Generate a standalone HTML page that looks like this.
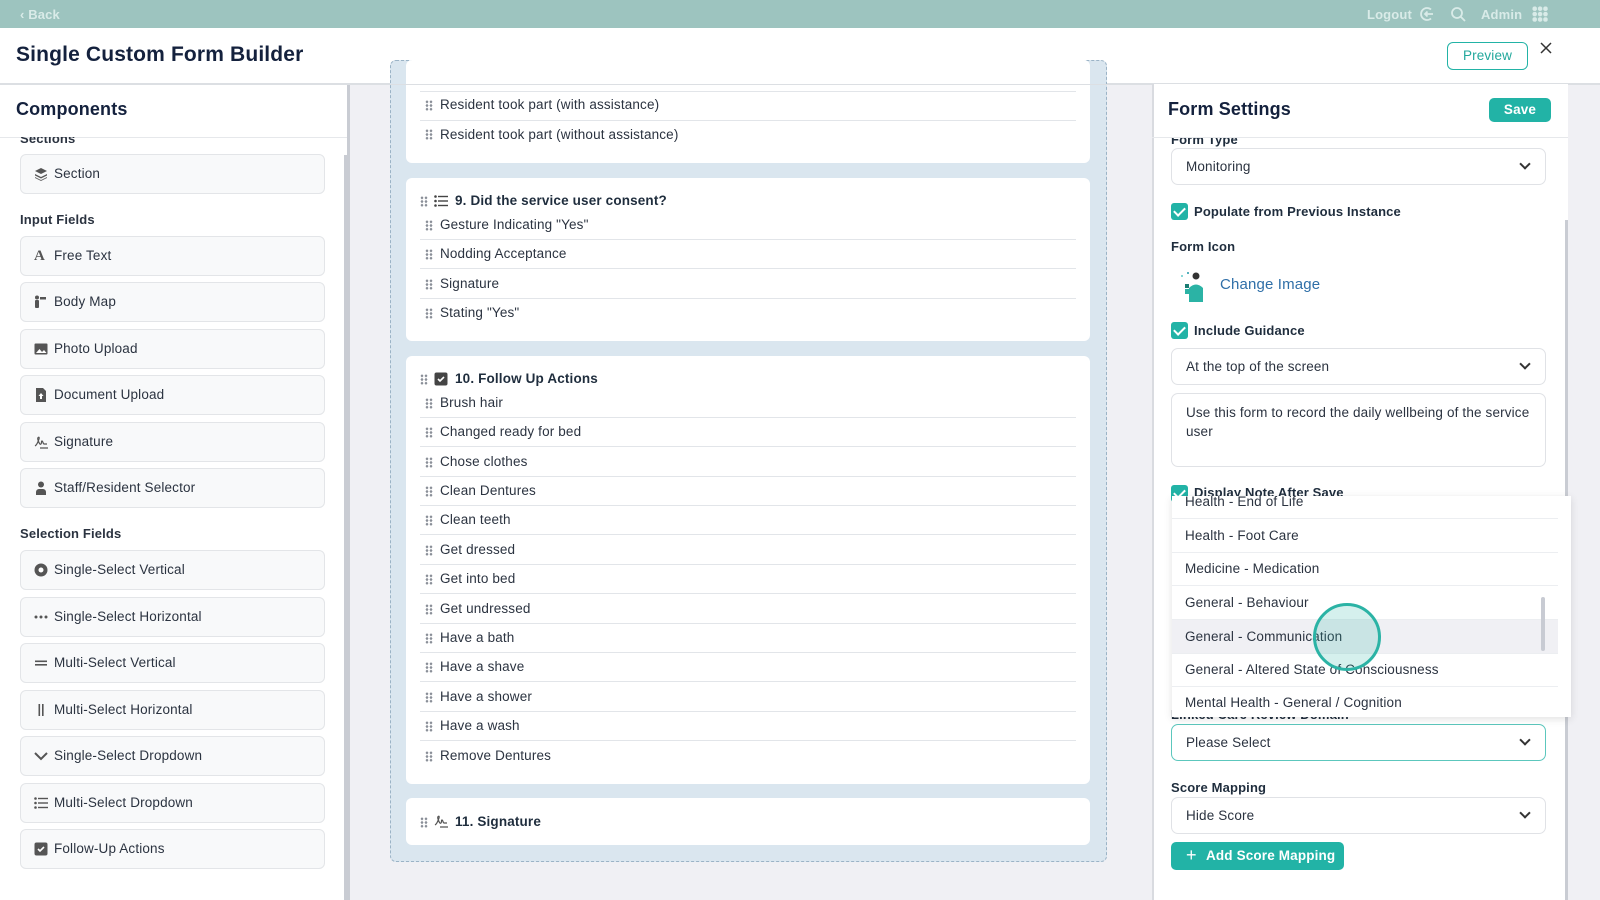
<!DOCTYPE html>
<html><head><meta charset="utf-8"><style>
*{box-sizing:border-box;margin:0;padding:0}
body{width:1600px;height:900px;overflow:hidden;font-family:"Liberation Sans",sans-serif;color:#1f2d3d;background:#f0f0f4;position:relative;font-size:13.5px;letter-spacing:0.15px}
.a{position:absolute}
.top{left:0;top:0;width:1600px;height:28px;background:#9dc4bf;color:#d9ebe8;font-size:13px;font-weight:bold}
.hdr{left:0;top:28px;width:1600px;height:56px;background:#fff;border-bottom:1px solid #dcdfe3}
.left{left:0;top:84px;width:347px;height:816px;background:#fff;overflow:hidden}
.item{position:absolute;left:20px;width:305px;height:40px;background:#f8f9fa;border:1px solid #e3e5e8;border-radius:6px;line-height:38px;padding-left:33px;color:#2b3340}
.ic{position:absolute;left:13px;top:12px;width:14px;height:14px}
.lbl{position:absolute;left:20px;font-weight:bold;font-size:13px;color:#2b3340}
.cont{left:390px;top:60px;width:717px;height:802px;background:#dae6ef;border:1px dashed #9bb3c6;border-radius:6px}
.card{position:absolute;left:406px;width:684px;background:#fff;border-radius:6px}
.row{position:absolute;left:440px;font-size:13.5px;color:#2b3340}
.sep{position:absolute;left:420px;width:656px;height:1px;background:#e2e5e9}
.dh{position:absolute;width:8px;height:11px;background-image:radial-gradient(circle,#8a8f98 1.2px,transparent 1.4px);background-size:4px 3.7px}
.right{left:1152px;top:84px;width:416px;height:816px;background:#fff;border-left:2px solid #d9dbe0}
.sel{position:absolute;left:1171px;width:375px;height:37px;border:1px solid #e0e2e6;border-radius:7px;background:#fff;padding-left:14px;line-height:35px;color:#2b3340}
.chev{position:absolute;right:16px;width:8px;height:8px;border-right:2px solid #333;border-bottom:2px solid #333;transform:rotate(45deg);top:11px}
.cb{position:absolute;left:1171px;width:17px;height:17px;background:#22b3a6;border-radius:3px}
.cb:after{content:"";position:absolute;left:5px;top:2px;width:5px;height:9px;border-right:2px solid #fff;border-bottom:2px solid #fff;transform:rotate(45deg)}
.rl{position:absolute;left:1171px;font-weight:bold;font-size:13px;color:#1f2d3d}
.dd{position:absolute;left:1172px;top:496px;width:399px;height:221px;background:#fff;box-shadow:0 2px 8px rgba(0,0,0,.12);overflow:hidden}
.ddi{position:absolute;left:0;width:386px;height:33.5px;border-bottom:1px solid #eceef1;padding-left:13px;line-height:33px;color:#2b3340}
</style></head><body>
<svg width="0" height="0" style="position:absolute"><defs><g id="sig"><path d="M1 11c2-1 3-4 4-7 1-3-2-2-1 1 1 3 2 5 3 4s0-3 1-3 1 3 2 3h3M6 13h8" fill="none" stroke="#555" stroke-width="1.2"/></g></defs></svg>
<div class="a top"><span class="a" style="left:20px;top:7px">‹ Back</span>
<span class="a" style="left:1367px;top:7px">Logout</span>
<svg class="a" style="left:1419px;top:6px" width="16" height="16" viewBox="0 0 16 16" fill="none" stroke="#d9ebe8" stroke-width="1.8"><path d="M12 3.5A6 6 0 1 0 12 12.5M14 8H6M8.5 5.5 6 8l2.5 2.5"/></svg>
<svg class="a" style="left:1450px;top:6px" width="16" height="16" viewBox="0 0 16 16" fill="none" stroke="#d9ebe8" stroke-width="1.8"><circle cx="7" cy="7" r="5"/><path d="M11 11l4 4"/></svg>
<span class="a" style="left:1481px;top:7px">Admin</span>
<div class="a" style="left:1532px;top:6px;width:16px;height:16px;background-image:radial-gradient(circle,#d9ebe8 2.2px,transparent 2.3px);background-size:5.4px 5.4px"></div>
</div>
<div class="a hdr"><div class="a" style="left:16px;top:15px;font-size:21px;font-weight:bold;color:#14213d">Single Custom Form Builder</div>
<div class="a" style="left:1447px;top:14px;width:81px;height:28px;border:1.5px solid #22b3a6;border-radius:6px;color:#22a89c;text-align:center;line-height:25px;font-size:13.5px">Preview</div>
<svg class="a" style="left:1540px;top:14px" width="12" height="12" viewBox="0 0 12 12" stroke="#333" stroke-width="1.5"><path d="M1 1l10 10M11 1L1 11"/></svg></div>

<div class="a left">
<div class="a" style="left:16px;top:15px;font-size:18px;font-weight:bold;color:#14213d">Components</div>
<div class="a" style="left:0;top:53px;width:347px;height:1px;background:#e6e8eb"></div>
<div class="a" style="left:344px;top:71px;width:3px;height:745px;background:#c9ccd3"></div>
</div>
<div class="lbl" style="top:131px;clip-path:inset(6px 0 0 0)">Sections</div>
<div class="item" style="top:154px"><svg class="ic" viewBox="0 0 14 14" fill="#555"><path d="M7 1l6 3-6 3-6-3z"/><path d="M1 7l6 3 6-3v1.5l-6 3-6-3z"/><path d="M1 10l6 3 6-3v1l-6 3-6-3z" opacity=".9"/></svg>Section</div>
<div class="lbl" style="top:212px">Input Fields</div>
<div class="item" style="top:236px"><span class="ic" style="font-weight:bold;font-size:15px;line-height:14px;color:#555;font-family:'Liberation Serif',serif">A</span>Free Text</div>
<div class="item" style="top:282px"><svg class="ic" viewBox="0 0 14 14" fill="#555"><circle cx="3" cy="2.5" r="2"/><rect x="1" y="5" width="4" height="8" rx="1"/><rect x="6" y="2" width="6" height="2.5"/></svg>Body Map</div>
<div class="item" style="top:329px"><svg class="ic" viewBox="0 0 14 14"><rect x="0.5" y="1.5" width="13" height="11" rx="1" fill="#555"/><path d="M2 11l3.5-4 2.5 3 2-2 2.5 3z" fill="#fff"/></svg>Photo Upload</div>
<div class="item" style="top:375px"><svg class="ic" viewBox="0 0 14 14"><path d="M2 0h7l3 3v11H2z" fill="#555"/><path d="M7 5l-2.5 3h1.5v3h2V8h1.5z" fill="#fff"/></svg>Document Upload</div>
<div class="item" style="top:422px"><svg class="ic" viewBox="0 0 14 14"><use href="#sig"/></svg>Signature</div>
<div class="item" style="top:468px"><svg class="ic" viewBox="0 0 14 14" fill="#555"><circle cx="7" cy="3.5" r="3"/><path d="M2 14v-3a3 3 0 0 1 3-3h4a3 3 0 0 1 3 3v3z"/></svg>Staff/Resident Selector</div>
<div class="lbl" style="top:526px">Selection Fields</div>
<div class="item" style="top:550px"><svg class="ic" viewBox="0 0 14 14"><circle cx="7" cy="7" r="6.5" fill="#555"/><circle cx="7" cy="7" r="2.5" fill="#fff"/></svg>Single-Select Vertical</div>
<div class="item" style="top:597px"><svg class="ic" viewBox="0 0 14 14" fill="#555"><circle cx="2" cy="7" r="1.5"/><circle cx="7" cy="7" r="1.5"/><circle cx="12" cy="7" r="1.5"/></svg>Single-Select Horizontal</div>
<div class="item" style="top:643px"><svg class="ic" viewBox="0 0 14 14" fill="#555"><rect x="1" y="4.5" width="12" height="1.6"/><rect x="1" y="8" width="12" height="1.6"/></svg>Multi-Select Vertical</div>
<div class="item" style="top:690px"><svg class="ic" viewBox="0 0 14 14" fill="#555"><rect x="4.5" y="1" width="1.6" height="12"/><rect x="8" y="1" width="1.6" height="12"/></svg>Multi-Select Horizontal</div>
<div class="item" style="top:736px"><svg class="ic" viewBox="0 0 14 14" fill="none" stroke="#555" stroke-width="2"><path d="M1 4l6 6 6-6"/></svg>Single-Select Dropdown</div>
<div class="item" style="top:783px"><svg class="ic" viewBox="0 0 14 14" fill="#555"><circle cx="1.5" cy="2.5" r="1.3"/><circle cx="1.5" cy="7" r="1.3"/><circle cx="1.5" cy="11.5" r="1.3"/><rect x="4" y="1.8" width="10" height="1.4"/><rect x="4" y="6.3" width="10" height="1.4"/><rect x="4" y="10.8" width="10" height="1.4"/></svg>Multi-Select Dropdown</div>
<div class="item" style="top:829px"><svg class="ic" viewBox="0 0 14 14"><rect x="0.5" y="0.5" width="13" height="13" rx="2" fill="#555"/><path d="M4 7l2 2 4-4" stroke="#fff" stroke-width="1.6" fill="none"/></svg>Follow-Up Actions</div>

<div class="a" style="left:347px;top:84px;width:805px;height:816px;background:#f0f0f4"></div>
<div class="a" style="left:347px;top:84px;width:3px;height:816px;background:#c9ccd3"></div>
<div class="a cont"></div>
<div class="card" style="top:60px;height:103px"></div>
<div class="card" style="top:178px;height:163px"></div>
<div class="card" style="top:356px;height:428px"></div>
<div class="card" style="top:798px;height:47px"></div>
<div class="a" style="left:0;top:84px;width:1600px;height:1px;background:#dcdfe3"></div>

<div class="sep" style="top:91px"></div>
<div class="dh" style="left:425px;top:100px"></div><div class="row" style="top:97px">Resident took part (with assistance)</div>
<div class="sep" style="top:120px"></div>
<div class="dh" style="left:425px;top:129px"></div><div class="row" style="top:127px">Resident took part (without assistance)</div>

<div class="dh" style="left:420px;top:196px"></div>
<svg class="a" style="left:434px;top:195px" width="14" height="12" viewBox="0 0 14 12" fill="#444"><circle cx="1.5" cy="1.5" r="1.3"/><circle cx="1.5" cy="6" r="1.3"/><circle cx="1.5" cy="10.5" r="1.3"/><rect x="4" y="0.8" width="10" height="1.4"/><rect x="4" y="5.3" width="10" height="1.4"/><rect x="4" y="9.8" width="10" height="1.4"/></svg>
<div class="row" style="left:455px;top:193px;font-weight:bold;color:#1f2d3d">9. Did the service user consent?</div>

<div class="dh" style="left:420px;top:374px"></div>
<svg class="a" style="left:434px;top:372px" width="14" height="14" viewBox="0 0 14 14"><rect x="0.5" y="0.5" width="13" height="13" rx="2" fill="#444"/><path d="M4 7l2 2 4-4" stroke="#fff" stroke-width="1.6" fill="none"/></svg>
<div class="row" style="left:455px;top:371px;font-weight:bold;color:#1f2d3d">10. Follow Up Actions</div>

<div class="dh" style="left:420px;top:817px"></div>
<svg class="a" style="left:434px;top:814px" width="14" height="14" viewBox="0 0 14 14"><use href="#sig"/></svg>
<div class="row" style="left:455px;top:814px;font-weight:bold;color:#1f2d3d">11. Signature</div>

<div class="dh" style="left:425px;top:220px"></div><div class="row" style="top:217px">Gesture Indicating "Yes"</div><div class="sep" style="top:239px"></div>
<div class="dh" style="left:425px;top:249px"></div><div class="row" style="top:246px">Nodding Acceptance</div><div class="sep" style="top:268px"></div>
<div class="dh" style="left:425px;top:279px"></div><div class="row" style="top:276px">Signature</div><div class="sep" style="top:298px"></div>
<div class="dh" style="left:425px;top:308px"></div><div class="row" style="top:305px">Stating "Yes"</div>

<div class="dh" style="left:425px;top:398px"></div><div class="row" style="top:395px">Brush hair</div><div class="sep" style="top:417px"></div>
<div class="dh" style="left:425px;top:427px"></div><div class="row" style="top:424px">Changed ready for bed</div><div class="sep" style="top:446px"></div>
<div class="dh" style="left:425px;top:457px"></div><div class="row" style="top:454px">Chose clothes</div><div class="sep" style="top:476px"></div>
<div class="dh" style="left:425px;top:486px"></div><div class="row" style="top:483px">Clean Dentures</div><div class="sep" style="top:505px"></div>
<div class="dh" style="left:425px;top:515px"></div><div class="row" style="top:512px">Clean teeth</div><div class="sep" style="top:534px"></div>
<div class="dh" style="left:425px;top:545px"></div><div class="row" style="top:542px">Get dressed</div><div class="sep" style="top:564px"></div>
<div class="dh" style="left:425px;top:574px"></div><div class="row" style="top:571px">Get into bed</div><div class="sep" style="top:593px"></div>
<div class="dh" style="left:425px;top:604px"></div><div class="row" style="top:601px">Get undressed</div><div class="sep" style="top:623px"></div>
<div class="dh" style="left:425px;top:633px"></div><div class="row" style="top:630px">Have a bath</div><div class="sep" style="top:652px"></div>
<div class="dh" style="left:425px;top:662px"></div><div class="row" style="top:659px">Have a shave</div><div class="sep" style="top:681px"></div>
<div class="dh" style="left:425px;top:692px"></div><div class="row" style="top:689px">Have a shower</div><div class="sep" style="top:711px"></div>
<div class="dh" style="left:425px;top:721px"></div><div class="row" style="top:718px">Have a wash</div><div class="sep" style="top:740px"></div>
<div class="dh" style="left:425px;top:751px"></div><div class="row" style="top:748px">Remove Dentures</div>

<div class="a right"></div>
<div class="a" style="left:1565px;top:220px;width:3px;height:680px;background:#c9ccd3"></div>
<div class="a" style="left:1168px;top:99px;font-size:18px;font-weight:bold;color:#14213d">Form Settings</div>
<div class="a" style="left:1489px;top:98px;width:62px;height:24px;background:#22b3a6;border-radius:5px;color:#fff;font-weight:bold;text-align:center;line-height:24px;font-size:13.5px">Save</div>
<div class="a" style="left:1152px;top:137px;width:416px;height:1px;background:#e6e8eb"></div>
<div class="rl" style="top:132px;clip-path:inset(6px 0 0 0)">Form Type</div>
<div class="sel" style="top:148px">Monitoring<span class="chev"></span></div>
<div class="cb" style="top:203px"></div><div class="rl" style="left:1194px;top:204px">Populate from Previous Instance</div>
<div class="rl" style="top:239px">Form Icon</div>
<svg class="a" style="left:1176px;top:270px" width="36" height="32" viewBox="0 0 36 32"><circle cx="6" cy="6" r="1" fill="#6cc"/><circle cx="12" cy="3" r="1" fill="#29a"/><circle cx="20" cy="6" r="3.5" fill="#333"/><path d="M13 32v-14q7-7 14 0v14z" fill="#2bb3a5"/><rect x="9" y="19" width="6" height="5" fill="#2bb3a5"/><rect x="9" y="14" width="4" height="4" fill="#1b7d73"/></svg>
<div class="a" style="left:1220px;top:276px;font-size:15px;color:#2f6fa8">Change Image</div>
<div class="cb" style="top:322px"></div><div class="rl" style="left:1194px;top:323px">Include Guidance</div>
<div class="sel" style="top:348px">At the top of the screen<span class="chev"></span></div>
<div class="sel" style="top:393px;height:74px;line-height:19px;padding-top:9px;padding-right:14px">Use this form to record the daily wellbeing of the service user</div>
<div class="cb" style="top:485px"></div><div class="rl" style="left:1194px;top:485px">Display Note After Save</div>
<div class="rl" style="top:707px">Linked Care Review Domain</div>
<div class="sel" style="top:724px;border-color:#5cc7bd">Please Select<span class="chev"></span></div>
<div class="rl" style="top:780px">Score Mapping</div>
<div class="sel" style="top:797px">Hide Score<span class="chev"></span></div>
<div class="a" style="left:1171px;top:842px;width:173px;height:28px;background:#22b3a6;border-radius:5px;color:#fff;font-weight:bold;line-height:28px;padding-left:35px;font-size:13.5px">Add Score Mapping</div>
<div class="a" style="left:1186px;top:846px;color:#fff;font-size:18px;line-height:18px">+</div>

<div class="dd">
<div class="ddi" style="top:-11px">Health - End of Life</div>
<div class="ddi" style="top:23px">Health - Foot Care</div>
<div class="ddi" style="top:56px">Medicine - Medication</div>
<div class="ddi" style="top:90px">General - Behaviour</div>
<div class="ddi" style="top:124px;background:#f0f0f4">General - Communication</div>
<div class="ddi" style="top:157px">General - Altered State of Consciousness</div>
<div class="ddi" style="top:190px;border:none">Mental Health - General / Cognition</div>
<div class="a" style="left:369px;top:101px;width:4px;height:54px;background:#c8cbd3;border-radius:2px"></div>
</div>
<div class="a" style="left:1313px;top:603px;width:68px;height:68px;border:3px solid #2bb3a5;border-radius:50%;background:rgba(43,179,165,.2)"></div>
</body></html>
